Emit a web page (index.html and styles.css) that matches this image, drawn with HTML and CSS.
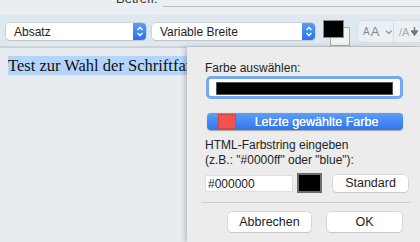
FILE: index.html
```html
<!DOCTYPE html>
<html lang="de">
<head>
    <meta charset="UTF-8">
    <title>Farbe auswählen</title>
    <link rel="stylesheet" href="styles.css">
</head>
<body>
    <div class="window">
        <div class="subject-row">
            <span class="subject-label">Betreff:</span>
            <span class="subject-field"></span>
        </div>

        <div class="toolbar">
            <div class="select select-para">
                <span class="select-text">Absatz</span>
                <span class="stepper"><svg width="8" height="11" viewBox="0 0 8 11"><path d="M1.5 4 L4 1.5 L6.5 4 M1.5 7 L4 9.5 L6.5 7" fill="none" stroke="#fff" stroke-width="1.3"/></svg></span>
            </div>
            <div class="select select-width">
                <span class="select-text">Variable Breite</span>
                <span class="stepper"><svg width="8" height="11" viewBox="0 0 8 11"><path d="M1.5 4 L4 1.5 L6.5 4 M1.5 7 L4 9.5 L6.5 7" fill="none" stroke="#fff" stroke-width="1.3"/></svg></span>
            </div>
            <div class="color-well">
                <span class="well-back"></span>
                <span class="well-front"></span>
            </div>
            <div class="seg-group">
                <span class="seg"><span class="aa-small">A</span><span class="aa-big">A</span>
                    <svg width="8" height="6" viewBox="0 0 8 6"><path d="M1 1.5 L4 4.5 L7 1.5" fill="none" stroke="#888" stroke-width="1.2"/></svg></span>
                <span class="seg seg-second"><span class="aa-slash">/A</span><svg width="7" height="9" viewBox="0 0 7 9"><path d="M3.5 0 V5 M0.5 4 L3.5 8 L6.5 4 Z" fill="#777" stroke="#777" stroke-width="1.4"/></svg></span>
            </div>
        </div>

        <div class="doc">
            <span class="selected">Test zur Wahl der Schriftfarbe</span>
        </div>

        <div class="color-dialog">
            <p class="dlg-label">Farbe auswählen:</p>
            <div class="color-field"><span class="color-field-inner"></span></div>

            <button class="last-color"><span class="last-swatch"></span><span class="last-text">Letzte gewählte Farbe</span></button>

            <p class="dlg-label html-label">HTML-Farbstring eingeben<br>(z.B.: "#0000ff" oder "blue"):</p>

            <div class="html-row">
                <span class="hex-input">#000000</span>
                <span class="hex-swatch"></span>
                <button class="btn btn-standard">Standard</button>
            </div>

            <div class="dlg-sep"></div>

            <div class="dlg-actions">
                <button class="btn btn-cancel">Abbrechen</button>
                <button class="btn btn-ok">OK</button>
            </div>
        </div>
    </div>
</body>
</html>
```

FILE: styles.css
```css
html, body { margin: 0; padding: 0; }
body { width: 420px; height: 242px; overflow: hidden; background: #e8ecf0; font-family: 'Liberation Sans', Arial, sans-serif; color: #222; }

.window { position: relative; width: 420px; height: 242px; overflow: hidden; }

.subject-row { height: 15px; background: #e9eef2; display: flex; align-items: flex-start; }
.subject-label { font-size: 13px; line-height: 13px; margin: -8px 0 0 116px; color: #333; }
.subject-field { flex: 1; margin: 6px 0 0 5px; border-bottom: 1px solid #b9bfc4; height: 0; }

.toolbar { height: 33px; box-sizing: border-box; background: #dfe8ee; border-bottom: 2px solid #cdd2d6; display: flex; align-items: flex-start; padding-left: 6px; }
.toolbar > * { flex-shrink: 0; }

.select { margin-top: 8px; height: 17px; background: #fff; border-radius: 4px; box-shadow: 0 0 0 0.5px #b8bec4, 0 1px 1px rgba(0,0,0,0.12); display: flex; align-items: center; font-size: 12px; box-sizing: border-box; }
.select-text { flex: 1; padding-left: 8px; color: #222; }
.select-para { width: 140px; }
.select-width { width: 163px; margin-left: 6px; }
.stepper { width: 13px; height: 17px; background: linear-gradient(#5a9cf8, #2a73ee); border-radius: 0 4px 4px 0; display: flex; align-items: center; justify-content: center; }

.color-well { position: relative; width: 27px; height: 25px; margin: 5px 0 0 8px; }
.well-back { position: absolute; left: 7px; top: 7px; width: 18px; height: 17px; background: #eef6f0; border: 1px solid #a8acaf; }
.well-front { position: absolute; left: 0; top: 0; width: 19px; height: 16px; background: #000; border: 1px solid #8a8a8a; }

.seg-group { margin: 6px 0 0 8px; height: 21px; width: 80px; background: #eaf0f3; border-radius: 5px; box-shadow: 0 0 0 0.5px #d0d6da; display: flex; }
.seg { display: flex; align-items: center; padding-left: 5px; width: 35px; box-sizing: border-box; color: #888; gap: 1px; }
.seg svg { margin-left: 5px; }
.aa-small { font-size: 10px; }
.aa-big { font-size: 13px; }
.seg-second { border-left: 1px solid #d6dcdf; padding-left: 5px; }
.aa-slash { font-size: 11px; color: #aaa; margin-right: 1px; }
.seg-second svg { margin-left: 0; }

.doc { padding: 9px 0 0 8px; font-family: 'Liberation Serif', 'Times New Roman', serif; font-size: 16.5px; line-height: 17px; white-space: nowrap; }
.selected { background: #b4d5fb; color: #111; }

.color-dialog { position: absolute; left: 187px; top: 47px; right: 0; bottom: 0; background: #ececec; box-shadow: -2px 0 5px rgba(0,0,0,0.22); padding: 14px 0 0 18px; box-sizing: border-box; font-size: 12px; color: #222; }

.dlg-label { margin: 0; line-height: 15px; }

.color-field { margin: 0 0 0 1px; width: 197px; height: 23px; box-sizing: border-box; border: 3px solid #74a9ef; border-radius: 5px; background: #fff; padding: 3px 7px; }
.color-field-inner { display: block; height: 11px; background: #000; border: 0.5px solid #555; }

.last-color { display: flex; align-items: center; margin: 14px 0 0 2px; width: 196px; height: 17px; padding: 0 0 0 11px; border: none; border-radius: 4px; background: linear-gradient(#5d9ef8, #2f75ee); box-shadow: 0 0.5px 1px rgba(0,0,0,0.3); font-family: inherit; cursor: default; }
.last-swatch { width: 16px; height: 13px; background: #f2534d; border: 0.5px solid #d24640; }
.last-text { flex: 1; text-align: center; color: #fff; font-size: 12.5px; margin-left: -16px; padding-left: 10px; text-shadow: 0 0 0.4px #fff; }

.html-label { margin-top: 8px; line-height: 15px; }

.html-row { display: flex; align-items: center; margin-top: 5px; height: 20px; }
.hex-input { width: 88px; height: 17px; box-sizing: border-box; background: #fff; border: 0.5px solid #e0e0e0; padding-left: 2px; line-height: 16px; font-size: 12px; }
.hex-swatch { width: 25px; height: 20px; box-sizing: border-box; margin-left: 4px; background: #000; border: 2px solid #6e6e6e; }

.btn { font-family: inherit; font-size: 12.5px; color: #222; background: #fff; border: none; border-radius: 4px; box-shadow: 0 0 0 0.5px #c6c6c6, 0 1px 1px rgba(0,0,0,0.15); height: 17px; padding: 0; cursor: default; }
.btn-standard { width: 75px; margin-left: 11px; }

.dlg-sep { margin: 9px 0 0 -4px; width: 209px; border-top: 1px solid #cdcdcd; }

.dlg-actions { display: flex; margin: 9px 0 0 23px; gap: 16px; }
.btn-cancel { width: 83px; height: 20px; }
.btn-ok { width: 75px; height: 20px; }
```
